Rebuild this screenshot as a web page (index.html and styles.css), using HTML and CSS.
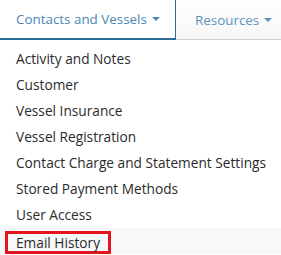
FILE: index.html
```html
<!DOCTYPE html>
<html>
<head>
<meta charset="utf-8">
<link rel="stylesheet" href="styles.css">
</head>
<body>
<nav class="nav">
  <div class="tab active">Contacts and Vessels<span class="caret"></span></div>
  <div class="tab">Resources<span class="caret"></span></div>
</nav>
<ul class="menu">
  <li class="item">Activity and Notes</li>
  <li class="item">Customer</li>
  <li class="item">Vessel Insurance</li>
  <li class="item">Vessel Registration</li>
  <li class="item">Contact Charge and Statement Settings</li>
  <li class="item">Stored Payment Methods</li>
  <li class="item">User Access</li>
  <li class="item hover"><span class="mark">Email History</span></li>
</ul>
</body>
</html>
```
FILE: styles.css
```css
html, body { margin: 0; padding: 0; background: #fff; }
body { font-family: "Open Sans", "Noto Sans", sans-serif; font-size: 13.7px; overflow: hidden; }
.nav { display: flex; height: 40px; }
.tab {
  display: flex; align-items: center; padding: 0 16px; box-sizing: border-box;
  color: #5b93bf; font-size: 13.4px; white-space: nowrap;
  background: linear-gradient(#ffffff, #f6f6f6);
  border-bottom: 1px solid #d4d4d4;
}
.tab.active { width: 176px; border-right: 1px solid #2a6e96; border-bottom: 2px solid #2a6e96; color: #4d87b5; background: #fff; }
.tab:not(.active) { flex: 1; padding-left: 19px; }
.caret { display: inline-block; margin-left: 5px; width: 0; height: 0; border-left: 4px solid transparent; border-right: 4px solid transparent; border-top: 4px solid currentColor; }
.menu { list-style: none; margin: 0; padding: 6px 0 0; }
.item { height: 26px; line-height: 26px; padding-left: 16px; color: #2b2b2b; white-space: nowrap; }
.item.hover { background: #f7f8fa; padding-left: 5px; display: flex; align-items: flex-end; }
.mark { border: 3px solid #e3141d; padding: 0 8px; line-height: 17px; height: 17px; }
```
